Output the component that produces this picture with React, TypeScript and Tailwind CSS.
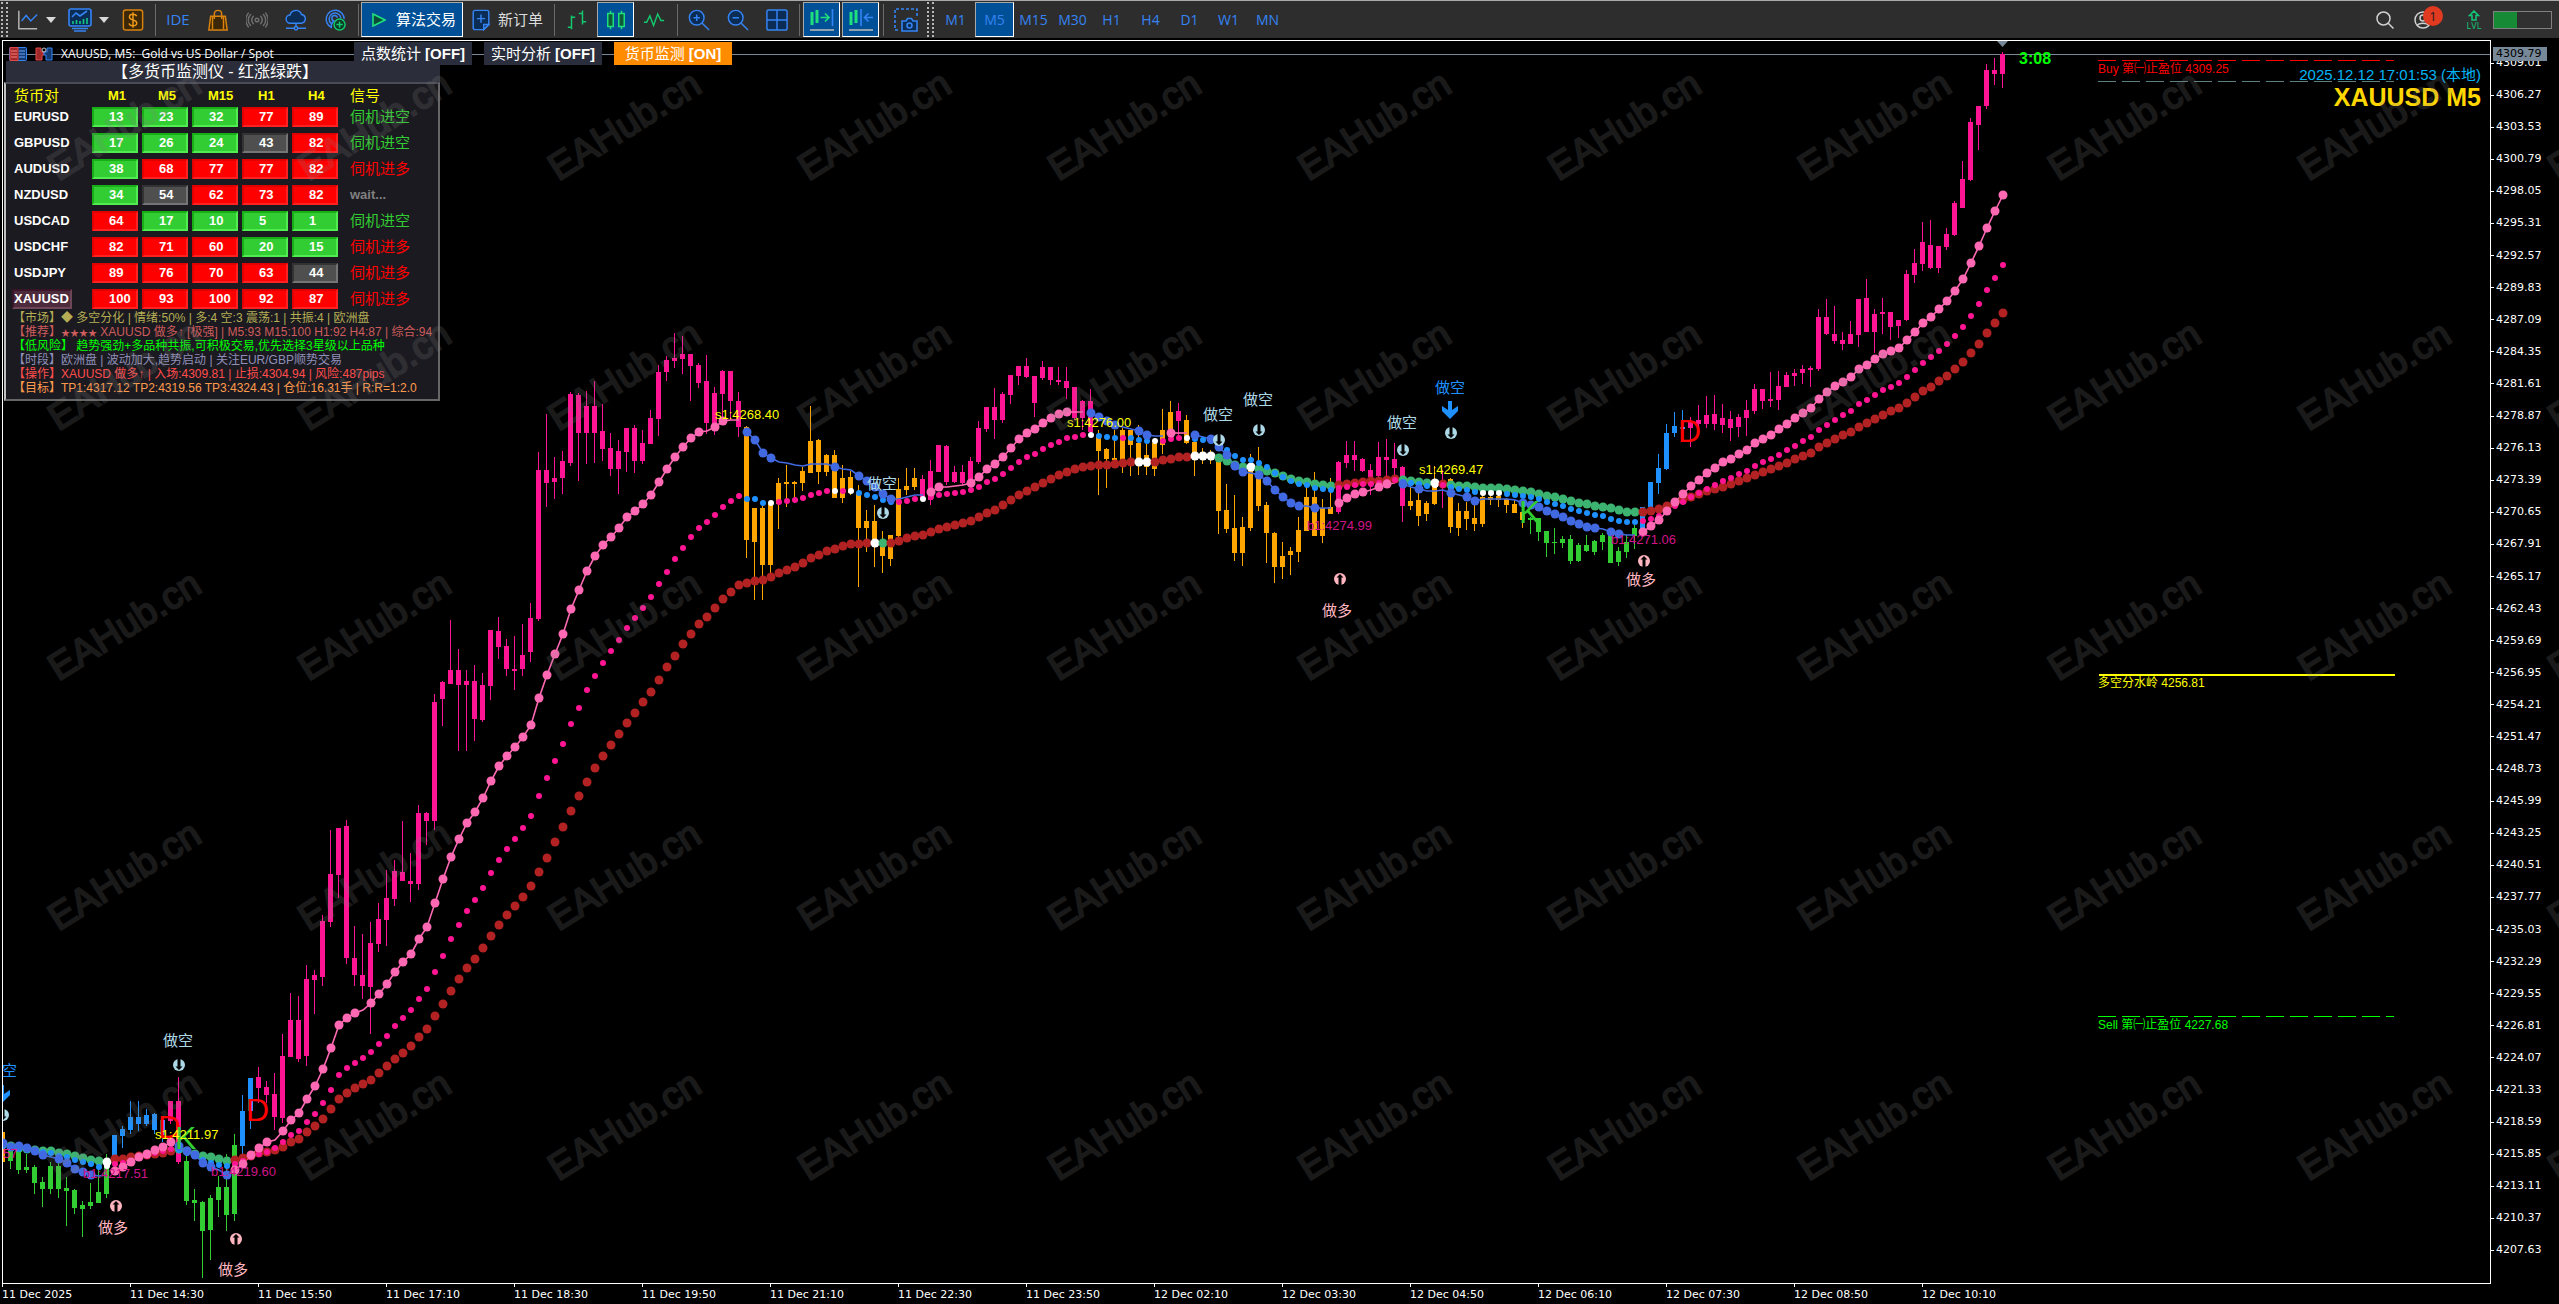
/**
 * Trading terminal - XAUUSD M5 chart with toolbar, currency monitor panel,
 * three moving averages and signal markers.
 */

import type { ReactNode } from 'react';

type ColorRun = [start: number, color: string];
type Candle = [high: number, top: number, bottom: number, low: number];
type Tone = 'up' | 'down' | 'flat';

const PINK = '#ff1493';
const ORANGE = '#ffa500';
const GREEN = '#32cd32';
const BLUE = '#1e90ff';
const BROWN = '#b22222';
const SEA = '#3cb371';
const WHITE = '#ffffff';
const ROYAL = '#4169e1';
const HOT = '#ff69b4';

// Candle geometry, one tuple per bar: high, body top, body bottom, low
const CANDLES: Candle[] = [
  [1132, 1132, 1162, 1162], [1148, 1148, 1161, 1169], [1150, 1150, 1170, 1174], [1154, 1167, 1170, 1173], [1165, 1167, 1183, 1194],
  [1177, 1182, 1189, 1207], [1162, 1166, 1189, 1194], [1163, 1166, 1189, 1198], [1177, 1188, 1191, 1226], [1189, 1190, 1208, 1214],
  [1201, 1205, 1209, 1237], [1183, 1202, 1206, 1209], [1167, 1192, 1203, 1203], [1154, 1164, 1194, 1198], [1135, 1135, 1157, 1157],
  [1126, 1129, 1136, 1148], [1101, 1117, 1130, 1134], [1101, 1117, 1124, 1131], [1109, 1115, 1124, 1126], [1113, 1114, 1130, 1134],
  [1116, 1120, 1135, 1142], [1101, 1101, 1121, 1124], [1077, 1101, 1162, 1164], [1155, 1161, 1201, 1205], [1189, 1200, 1203, 1221],
  [1201, 1202, 1231, 1278], [1195, 1198, 1230, 1260], [1176, 1187, 1200, 1217], [1154, 1187, 1215, 1231], [1134, 1145, 1214, 1221],
  [1095, 1111, 1146, 1154], [1078, 1078, 1111, 1129], [1067, 1077, 1088, 1103], [1081, 1087, 1095, 1103], [1073, 1094, 1117, 1130],
  [1034, 1056, 1118, 1123], [993, 1020, 1057, 1057], [996, 1020, 1059, 1062], [965, 979, 1056, 1066], [970, 975, 980, 1014],
  [915, 921, 977, 986], [830, 874, 922, 927], [828, 828, 875, 898], [820, 826, 958, 964], [926, 958, 975, 986],
  [934, 975, 986, 999], [922, 943, 987, 1034], [903, 919, 944, 952], [870, 898, 920, 946], [860, 871, 899, 906],
  [821, 872, 881, 881], [853, 881, 884, 902], [805, 813, 884, 890], [812, 813, 821, 845], [694, 702, 821, 830],
  [681, 682, 699, 726], [620, 670, 684, 684], [649, 670, 685, 751], [670, 681, 685, 751], [665, 681, 719, 741],
  [673, 685, 720, 722], [630, 630, 686, 700], [617, 631, 647, 659], [639, 646, 669, 676], [636, 669, 671, 690],
  [624, 655, 669, 676], [603, 618, 652, 662], [452, 470, 619, 621], [414, 470, 483, 507], [457, 478, 482, 499],
  [451, 461, 478, 494], [392, 394, 463, 466], [393, 395, 433, 481], [391, 406, 433, 464], [381, 406, 433, 463],
  [404, 431, 449, 461], [433, 448, 469, 476], [440, 451, 469, 494], [428, 428, 452, 472], [425, 428, 461, 473],
  [430, 443, 461, 464], [410, 418, 444, 444], [365, 372, 419, 436], [356, 360, 372, 381], [333, 358, 361, 368],
  [336, 354, 359, 374], [354, 354, 366, 401], [363, 365, 383, 388], [355, 381, 423, 434], [387, 393, 428, 435],
  [370, 371, 394, 420], [371, 371, 401, 420], [392, 401, 427, 437], [426, 427, 540, 558], [508, 508, 542, 600],
  [506, 508, 565, 600], [504, 504, 565, 575], [478, 483, 504, 529], [465, 482, 484, 507], [481, 482, 484, 500],
  [467, 471, 483, 491], [406, 441, 473, 473], [439, 440, 472, 484], [454, 455, 472, 476], [450, 455, 498, 498],
  [465, 478, 498, 503], [471, 477, 493, 495], [485, 493, 528, 587], [510, 521, 528, 552], [505, 521, 540, 567],
  [531, 540, 556, 573], [535, 535, 559, 566], [478, 489, 536, 538], [468, 486, 490, 495], [468, 478, 487, 490],
  [475, 479, 498, 498], [460, 471, 500, 505], [445, 445, 472, 472], [445, 446, 482, 485], [466, 472, 482, 483],
  [465, 472, 483, 485], [457, 461, 480, 482], [421, 428, 462, 464], [407, 407, 429, 432], [388, 407, 420, 439],
  [392, 394, 420, 423], [375, 375, 395, 404], [366, 366, 376, 385], [358, 366, 377, 378], [376, 376, 403, 417],
  [361, 367, 378, 380], [367, 367, 380, 385], [367, 380, 382, 385], [367, 381, 388, 399], [387, 387, 418, 420],
  [400, 401, 418, 430], [389, 401, 432, 435], [430, 435, 451, 495], [448, 449, 459, 488], [430, 458, 460, 465],
  [428, 430, 460, 473], [430, 430, 445, 476], [425, 443, 462, 475], [440, 455, 467, 475], [440, 443, 469, 476],
  [409, 430, 445, 454], [401, 412, 430, 435], [403, 411, 421, 435], [415, 420, 443, 444], [440, 442, 455, 476],
  [448, 452, 455, 464], [450, 453, 457, 464], [460, 462, 511, 534], [484, 510, 529, 533], [495, 528, 553, 561],
  [517, 527, 553, 566], [454, 464, 528, 531], [447, 470, 506, 511], [502, 505, 533, 563], [532, 533, 567, 583],
  [542, 556, 567, 579], [547, 551, 555, 575], [517, 530, 552, 562], [487, 497, 531, 531], [472, 497, 536, 536],
  [499, 508, 536, 543], [478, 507, 514, 514], [461, 462, 512, 514], [441, 455, 463, 468], [441, 455, 460, 471],
  [458, 459, 471, 472], [464, 470, 477, 495], [442, 457, 476, 480], [439, 457, 460, 477], [443, 459, 468, 477],
  [466, 467, 506, 522], [487, 501, 506, 510], [490, 500, 516, 526], [501, 503, 514, 521], [466, 484, 504, 505],
  [470, 482, 487, 508], [478, 479, 527, 533], [503, 511, 528, 536], [502, 511, 519, 530], [504, 518, 524, 531],
  [493, 497, 524, 527], [495, 497, 500, 505], [494, 496, 500, 507], [498, 499, 505, 513], [500, 504, 513, 513],
  [507, 512, 520, 528], [517, 518, 520, 534], [518, 518, 532, 541], [531, 531, 543, 557], [528, 542, 543, 554],
  [536, 539, 543, 548], [535, 539, 561, 564], [543, 545, 561, 562], [535, 545, 551, 552], [540, 541, 552, 555],
  [533, 535, 542, 550], [533, 535, 563, 563], [547, 551, 562, 566], [535, 542, 552, 558], [525, 528, 536, 549],
  [507, 507, 529, 529], [482, 482, 507, 507], [454, 468, 483, 494], [424, 433, 469, 470], [412, 426, 433, 437],
  [410, 427, 429, 433], [417, 422, 428, 447], [405, 420, 424, 430], [396, 415, 424, 428], [395, 414, 424, 430],
  [404, 418, 425, 433], [411, 419, 428, 441], [414, 417, 427, 437], [400, 410, 418, 436], [384, 389, 411, 414],
  [389, 389, 401, 409], [372, 399, 401, 407], [371, 386, 400, 410], [372, 375, 387, 387], [369, 373, 376, 386],
  [365, 369, 373, 384], [366, 368, 370, 387], [309, 317, 369, 371], [299, 317, 334, 335], [306, 334, 341, 344],
  [332, 340, 344, 350], [321, 334, 344, 344], [299, 299, 335, 347], [279, 298, 332, 332], [309, 314, 332, 353],
  [298, 312, 314, 334], [312, 312, 327, 340], [320, 320, 326, 338], [270, 274, 320, 321], [249, 263, 275, 283],
  [222, 242, 264, 271], [220, 245, 268, 269], [246, 246, 268, 273], [228, 234, 247, 250], [201, 203, 235, 236],
  [161, 179, 208, 208], [118, 122, 180, 181], [106, 106, 125, 150], [64, 70, 106, 109], [58, 70, 74, 85],
  [52, 54, 74, 88],
];

const CANDLE_COLORS: ColorRun[] = [
  [0, ORANGE], [1, GREEN], [14, BLUE], [21, PINK], [23, GREEN], [30, BLUE], [32, PINK], [93, ORANGE], [115, PINK],
  [137, ORANGE], [147, PINK], [148, ORANGE], [167, PINK], [176, ORANGE], [180, PINK], [181, ORANGE], [191, GREEN],
  [205, BLUE], [211, PINK],
];

const SLOW = [
  1144, 1146, 1148, 1149, 1150, 1151, 1151, 1153, 1154, 1156, 1158, 1160, 1161, 1162, 1159, 1159, 1157, 1156, 1155, 1154,
  1153, 1151, 1149, 1151, 1154, 1156, 1157, 1159, 1161, 1160, 1158, 1156, 1153, 1152, 1150, 1147, 1142, 1139, 1132, 1126,
  1119, 1109, 1099, 1093, 1088, 1084, 1080, 1073, 1066, 1059, 1053, 1046, 1037, 1029, 1016, 1004, 991, 979, 968, 959,
  948, 936, 925, 915, 906, 897, 886, 872, 858, 842, 827, 811, 796, 782, 768, 756, 745, 734, 723, 713,
  702, 692, 680, 667, 656, 644, 634, 624, 617, 608, 599, 592, 585, 583, 581, 580, 577, 573, 570, 567,
  563, 558, 555, 551, 549, 546, 544, 544, 543, 543, 543, 543, 541, 538, 536, 535, 532, 529, 527, 525,
  523, 521, 517, 513, 510, 505, 500, 495, 491, 487, 483, 479, 475, 472, 469, 467, 466, 465, 465, 464,
  463, 462, 462, 462, 462, 460, 459, 457, 457, 456, 456, 456, 458, 461, 465, 467, 467, 469, 471, 473,
  476, 479, 481, 482, 484, 485, 486, 485, 484, 483, 482, 481, 481, 480, 479, 480, 481, 482, 483, 483,
  484, 485, 486, 486, 487, 488, 488, 488, 489, 490, 491, 492, 494, 496, 497, 499, 501, 503, 504, 506,
  507, 508, 510, 512, 512, 512, 511, 509, 506, 503, 500, 497, 494, 491, 489, 487, 484, 481, 478, 475,
  472, 469, 466, 463, 459, 456, 453, 447, 443, 439, 435, 432, 427, 423, 419, 415, 411, 408, 403, 397,
  391, 387, 381, 376, 369, 362, 353, 344, 333, 323, 313,
];

const SLOW_COLORS: ColorRun[] = [
  [0, SEA], [13, WHITE], [14, BROWN], [22, SEA], [29, BROWN], [109, WHITE], [110, SEA], [111, BROWN], [142, WHITE],
  [144, BROWN], [149, WHITE], [152, SEA], [156, WHITE], [157, SEA], [167, BROWN], [175, SEA], [179, WHITE],
  [180, BROWN], [181, SEA], [205, BROWN],
];

const MID = [
  1146, 1148, 1149, 1150, 1151, 1152, 1153, 1156, 1157, 1160, 1162, 1164, 1167, 1166, 1164, 1163, 1161, 1158, 1156, 1153,
  1151, 1149, 1150, 1153, 1156, 1160, 1163, 1165, 1166, 1164, 1161, 1157, 1154, 1152, 1148, 1142, 1135, 1131, 1122, 1114,
  1103, 1090, 1075, 1068, 1063, 1058, 1052, 1044, 1036, 1026, 1018, 1010, 999, 989, 972, 956, 939, 925, 911, 900,
  888, 873, 860, 849, 839, 828, 816, 796, 778, 761, 744, 724, 708, 690, 676, 663, 651, 640, 628, 618,
  608, 597, 584, 572, 559, 548, 537, 528, 522, 515, 507, 501, 496, 499, 499, 503, 503, 502, 501, 500,
  498, 495, 493, 491, 491, 491, 491, 493, 495, 497, 500, 502, 502, 501, 499, 499, 497, 495, 494, 493,
  492, 490, 487, 482, 479, 474, 468, 462, 457, 454, 449, 445, 442, 438, 437, 435, 435, 436, 437, 438,
  438, 438, 440, 441, 441, 441, 439, 438, 438, 439, 440, 441, 444, 450, 456, 460, 460, 463, 467, 473,
  477, 481, 484, 485, 488, 489, 490, 488, 487, 485, 484, 484, 483, 482, 480, 482, 483, 484, 486, 485,
  485, 487, 489, 490, 492, 493, 493, 493, 494, 495, 496, 497, 499, 502, 504, 506, 509, 511, 513, 515,
  516, 519, 521, 522, 522, 521, 519, 516, 511, 506, 502, 497, 493, 489, 485, 481, 478, 474, 471, 466,
  462, 459, 455, 450, 446, 441, 437, 430, 425, 420, 415, 411, 404, 400, 395, 390, 387, 383, 377, 370,
  363, 357, 351, 344, 336, 327, 316, 304, 290, 278, 265,
];

const MID_COLORS: ColorRun[] = [
  [0, BLUE], [1, WHITE], [2, BLUE], [13, WHITE], [14, PINK], [22, BLUE], [29, PINK], [93, BLUE], [96, WHITE],
  [97, PINK], [104, WHITE], [105, PINK], [106, WHITE], [107, BLUE], [112, PINK], [115, WHITE], [116, PINK],
  [136, WHITE], [137, BLUE], [140, PINK], [141, BLUE], [144, WHITE], [145, PINK], [148, WHITE], [149, BLUE],
  [167, PINK], [175, BLUE], [179, WHITE], [180, PINK], [181, BLUE], [185, WHITE], [188, BLUE], [205, PINK],
];

const FAST = [
  1143, 1147, 1146, 1148, 1151, 1155, 1157, 1159, 1163, 1169, 1172, 1175, 1176, 1175, 1171, 1167, 1162, 1157, 1154, 1150,
  1147, 1142, 1146, 1151, 1155, 1163, 1167, 1170, 1175, 1170, 1164, 1155, 1148, 1142, 1140, 1131, 1120, 1113, 1099, 1086,
  1069, 1048, 1025, 1018, 1013, 1010, 1003, 994, 984, 972, 962, 954, 939, 927, 903, 879, 857, 839, 823, 812,
  798, 781, 766, 756, 747, 737, 725, 698, 675, 654, 634, 609, 590, 571, 556, 545, 537, 528, 517, 511,
  504, 495, 482, 469, 457, 447, 438, 432, 431, 427, 421, 420, 420, 432, 440, 453, 458, 462, 463, 465,
  466, 464, 464, 464, 467, 469, 470, 476, 481, 487, 494, 499, 499, 497, 495, 495, 492, 487, 487, 486,
  485, 483, 477, 469, 464, 457, 448, 439, 433, 429, 423, 418, 414, 412, 412, 412, 413, 417, 421, 425,
  427, 429, 431, 435, 436, 436, 433, 433, 433, 435, 437, 439, 447, 455, 466, 472, 473, 475, 481, 490,
  497, 503, 506, 506, 508, 508, 508, 503, 498, 494, 492, 490, 487, 484, 483, 484, 487, 489, 491, 491,
  490, 493, 495, 497, 501, 499, 499, 499, 499, 500, 503, 505, 507, 511, 514, 517, 521, 524, 527, 528,
  529, 532, 534, 535, 535, 532, 526, 520, 511, 502, 494, 486, 480, 473, 468, 462, 459, 454, 450, 443,
  439, 435, 429, 424, 418, 413, 408, 399, 392, 386, 382, 377, 369, 365, 359, 354, 351, 348, 340, 332,
  323, 317, 309, 301, 291, 279, 263, 246, 228, 211, 195,
];

const FAST_COLORS: ColorRun[] = [
  [0, ROYAL], [14, HOT], [22, ROYAL], [29, HOT], [93, ROYAL], [116, HOT], [136, ROYAL], [146, HOT], [149, ROYAL],
  [167, HOT], [175, ROYAL], [205, HOT],
];

const FAST_NO_DOT = new Set([
  6, 12, 13, 27, 34, 45, 88, 91, 92, 97, 98, 99, 100, 101, 102, 103, 105, 106, 112, 113, 114, 115, 118, 119, 120, 134,
  135, 140, 141, 144, 145, 147, 148, 150, 156, 163, 165, 166, 171, 174, 176, 178, 179, 180, 182, 185, 186, 187, 188,
  189, 200, 203, 204,
]);

const barX = (i: number) => 2 + i * 8;

const colorAt = (runs: ColorRun[], i: number) => {
  let color = runs[0][1];
  for (const [start, c] of runs) {
    if (start <= i) color = c;
  }
  return color;
};

const FAST_SEGMENTS = FAST_COLORS.map(([start, color], n) => {
  const end = n + 1 < FAST_COLORS.length ? FAST_COLORS[n + 1][0] : FAST.length;
  const points = FAST.slice(start, end)
    .map((y, k) => `${barX(start + k) + 1},${y}`)
    .join(' ');
  return { color, points };
});

const PRICE_TAGS = [
  { x: 3, y: 1158, text: '57', color: '#e0148a' },
  { x: 155, y: 1139, text: 's1:4211.97', color: '#ffff00' },
  { x: 83, y: 1178, text: 'b1:4217.51', color: '#d01488' },
  { x: 211, y: 1176, text: 'b1:4219.60', color: '#d01488' },
  { x: 715, y: 419, text: 's1:4268.40', color: '#ffff00' },
  { x: 1067, y: 427, text: 's1:4276.00', color: '#ffff00' },
  { x: 1307, y: 530, text: 'b1:4274.99', color: '#d01488' },
  { x: 1419, y: 474, text: 's1:4269.47', color: '#ffff00' },
  { x: 1611, y: 544, text: 'b1:4271.06', color: '#d01488' },
];

const SIGNALS = [
  { x: 2, y: 1076, text: '做空', color: BLUE },
  { x: 178, y: 1046, text: '做空', color: '#add8e6' },
  { x: 113, y: 1233, text: '做多', color: '#ffb6c1' },
  { x: 233, y: 1275, text: '做多', color: '#ffb6c1' },
  { x: 882, y: 489, text: '做空', color: '#add8e6' },
  { x: 1218, y: 420, text: '做空', color: '#add8e6' },
  { x: 1258, y: 405, text: '做空', color: '#add8e6' },
  { x: 1402, y: 428, text: '做空', color: '#add8e6' },
  { x: 1450, y: 393, text: '做空', color: BLUE },
  { x: 1337, y: 616, text: '做多', color: '#ffb6c1' },
  { x: 1641, y: 585, text: '做多', color: '#ffb6c1' },
];

const MARKERS = [
  { x: 3, y: 1115, up: false },
  { x: 179, y: 1065, up: false },
  { x: 116, y: 1206, up: true },
  { x: 236, y: 1239, up: true },
  { x: 883, y: 513, up: false },
  { x: 1219, y: 440, up: false },
  { x: 1259, y: 430, up: false },
  { x: 1403, y: 450, up: false },
  { x: 1451, y: 433, up: false },
  { x: 1340, y: 579, up: true },
  { x: 1644, y: 561, up: true },
];

const LETTERS = [
  { x: 158, y: 1138, text: 'D', color: '#ff0000' },
  { x: 246, y: 1121, text: 'D', color: '#ff0000' },
  { x: 175, y: 1149, text: 'K', color: GREEN },
  { x: 1519, y: 523, text: 'K', color: GREEN },
  { x: 1678, y: 442, text: 'D', color: '#ff0000' },
];

const PRICES = Array.from({ length: 38 }, (_, i) => (4309.01 - i * 2.74).toFixed(2));

const TIMES = [
  '11 Dec 2025', '11 Dec 14:30', '11 Dec 15:50', '11 Dec 17:10', '11 Dec 18:30', '11 Dec 19:50', '11 Dec 21:10',
  '11 Dec 22:30', '11 Dec 23:50', '12 Dec 02:10', '12 Dec 03:30', '12 Dec 04:50', '12 Dec 06:10', '12 Dec 07:30',
  '12 Dec 08:50', '12 Dec 10:10',
];

const TIMEFRAMES = ['M1', 'M5', 'M15', 'M30', 'H1', 'H4', 'D1', 'W1', 'MN'];

const PAIRS: { name: string; values: number[]; signal: 'short' | 'long' | 'wait' }[] = [
  { name: 'EURUSD', values: [13, 23, 32, 77, 89], signal: 'short' },
  { name: 'GBPUSD', values: [17, 26, 24, 43, 82], signal: 'short' },
  { name: 'AUDUSD', values: [38, 68, 77, 77, 82], signal: 'long' },
  { name: 'NZDUSD', values: [34, 54, 62, 73, 82], signal: 'wait' },
  { name: 'USDCAD', values: [64, 17, 10, 5, 1], signal: 'short' },
  { name: 'USDCHF', values: [82, 71, 60, 20, 15], signal: 'long' },
  { name: 'USDJPY', values: [89, 76, 70, 63, 44], signal: 'long' },
  { name: 'XAUUSD', values: [100, 93, 100, 92, 87], signal: 'long' },
];

const TONE_CLASSES: Record<Tone, string> = {
  up: 'bg-[#ff0000] border-t-[#e00000] border-l-[#e00000] border-r-[#ff2222] border-b-[#ff2222]',
  down: 'bg-[#32cd32] border-t-[#18ae18] border-l-[#18ae18] border-r-[#50ec50] border-b-[#50ec50]',
  flat: 'bg-[#4f4f4f] border-t-[#333333] border-l-[#333333] border-r-[#757575] border-b-[#757575]',
};

const SIGNAL_TEXT = {
  short: { label: '伺机进空', className: 'text-[15px] font-normal text-[#32cd32]' },
  long: { label: '伺机进多', className: 'text-[15px] font-normal text-[#ff0000]' },
  wait: { label: 'wait...', className: 'text-[13px] font-bold text-[#808080]' },
};

const NOTES: { text: ReactNode; className: string }[] = [
  { text: '【市场】◆ 多空分化 | 情绪:50% | 多:4 空:3 震荡:1 | 共振:4 | 欧洲盘', className: 'text-[#b5ad55]' },
  {
    text: <>【推荐】<span className="text-[9px]">★★★★</span> XAUUSD 做多↑ [极强] | M5:93 M15:100 H1:92 H4:87 | 综合:94</>,
    className: 'text-[#cd5c5c]',
  },
  { text: '【低风险】 趋势强劲+多品种共振,可积极交易,优先选择3星级以上品种', className: 'text-[#00ff00]' },
  { text: '【时段】欧洲盘 | 波动加大,趋势启动 | 关注EUR/GBP顺势交易', className: 'text-[#8f8fb8]' },
  { text: '【操作】XAUUSD 做多↑ | 入场:4309.81 | 止损:4304.94 | 风险:487pips', className: 'text-[#ff4d4d]' },
  { text: '【目标】TP1:4317.12 TP2:4319.56 TP3:4324.43 | 仓位:16.31手 | R:R=1:2.0', className: 'text-[#ff9a4d]' },
];

const toneOf = (value: number): Tone => {
  if (value >= 60) return 'up';
  if (value <= 40) return 'down';
  return 'flat';
};

/* ---------- Toolbar ---------- */

function Svg({ children, size = 'size-[22px]' }: { children: ReactNode; size?: string }) {
  return (
    <svg className={`${size} shrink-0`} viewBox="0 0 24 24" fill="none" stroke="#3584f4" strokeWidth={1.6} aria-hidden="true">
      {children}
    </svg>
  );
}

const Caret = () => (
  <svg className="w-[10px] h-[7px] shrink-0" viewBox="0 0 10 7" aria-hidden="true">
    <path d="M0 1h10L5 7z" fill="#d8d8d8" />
  </svg>
);

const Grip = () => (
  <span className="flex gap-[3px] h-full py-px">
    <span className="border-l-2 border-dotted border-[#b8b8b8]" />
    <span className="border-l-2 border-dotted border-[#b8b8b8]" />
  </span>
);

const Divider = ({ className }: { className: string }) => (
  <span className={`flex justify-center h-8 shrink-0 ${className}`}>
    <span className="w-px bg-[#6a6a6a]" />
  </span>
);

function ToolButton({ label, width, active = false, children }: { label: string; width: string; active?: boolean; children: ReactNode }) {
  return (
    <button
      type="button"
      aria-label={label}
      aria-pressed={active}
      className={`${width} h-[35px] shrink-0 flex items-center justify-center ${
        active ? 'bg-[#005097] border border-t-[#a8a8a8] border-l-[#a8a8a8] border-r-white border-b-white' : ''
      }`}
    >
      {children}
    </button>
  );
}

function Toolbar() {
  return (
    <header className="h-[38px] shrink-0 flex items-center bg-[#2d2d2d] border-t border-[#a9a9a9] font-['Open_Sans','Noto_Sans_CJK_SC',sans-serif]">
      <div className="w-[9px] h-full pl-px shrink-0"><Grip /></div>
      <button type="button" aria-label="图表类型" className="w-[50px] shrink-0 flex items-center gap-[7px] pl-2">
        <Svg>
          <path d="M2 2v19.5h20" stroke="#b5b5b5" />
          <path d="M5 13l5-6 5 6 7-7" />
        </Svg>
        <Caret />
      </button>
      <button type="button" aria-label="指标" className="w-[54px] shrink-0 flex items-center gap-[7px] pl-[9px]">
        <Svg size="size-6">
          <rect x="1" y="1" width="22" height="17" rx="2" fill="#0b2c55" />
          <path d="M4 9l4-4 4 3 7-5" />
          <path d="M5 16v-3M8.500 16v-4M12 16v-3M15.500 16v-5M19 16v-6" stroke="#12c98a" />
          <path d="M4 20.500h16M6 23h12" />
        </Svg>
        <Caret />
      </button>
      <ToolButton label="交易" width="w-10">
        <Svg>
          <rect x="1.500" y="1" width="21" height="22" rx="2.500" stroke="#d9830f" fill="#3c2706" />
          <path d="M16 8c-.5-1.600-2-2.200-4-2.200-2.200 0-3.900 1-3.900 2.900 0 4.200 8 2.400 8 6.600 0 2-1.800 3-4.100 3-2.300 0-3.900-.9-4.300-2.700M12 3.500v17" stroke="#f09a1a" />
        </Svg>
      </ToolButton>
      <Divider className="w-[5px]" />
      <ToolButton label="IDE" width="w-10">
        <span className="text-[15px] text-[#3584f4]">IDE</span>
      </ToolButton>
      <ToolButton label="市场" width="w-[39px]">
        <Svg>
          <path d="M4 8h16l2 15H2z" stroke="#d9830f" fill="#3c2706" />
          <path d="M8 11V5.500C8 3 9.500 1.500 12 1.500s4 1.500 4 4V11M6 8v14M18 8v14" stroke="#d9830f" />
        </Svg>
      </ToolButton>
      <ToolButton label="信号" width="w-[39px]">
        <Svg>
          <g stroke="#6e6e6e" strokeLinecap="round">
            <circle cx="12" cy="12" r="2" />
            <path d="M8 8c-2 2.300-2 5.700 0 8M16 8c2 2.300 2 5.700 0 8M5 6c-3.300 3.500-3.300 8.500 0 12M19 6c3.300 3.500 3.300 8.500 0 12M2.500 4.500c-3.300 4.500-3.300 10.500 0 15M21.500 4.500c3.300 4.500 3.300 10.500 0 15" />
          </g>
        </Svg>
      </ToolButton>
      <ToolButton label="虚拟主机" width="w-[39px]">
        <Svg>
          <path d="M6 15.500a4.500 4.500 0 0 1-.5-9A6.500 6.500 0 0 1 18 6a4.800 4.800 0 0 1 0 9.500z" fill="#0b2c55" />
          <path d="M12 15.500v4M1 21h9M14 21h9" />
          <circle cx="12" cy="21" r="1.800" />
        </Svg>
      </ToolButton>
      <ToolButton label="连接" width="w-10">
        <Svg>
          <path d="M8 20a9.800 9.800 0 1 1 14-9M8 16a6.500 6.500 0 1 1 10.500-6M11 13a3 3 0 1 1 3.500-3.500M8 21v-4l3-5" />
          <circle cx="17" cy="17" r="6" stroke="#12c96e" fill="#0c3a25" />
          <path d="M17 13.500v7M13.500 17h7" stroke="#12c96e" />
        </Svg>
      </ToolButton>
      <Divider className="w-[6px]" />
      <button
        type="button"
        aria-pressed
        className="w-[102px] h-[35px] shrink-0 flex items-center gap-[10px] pl-[10px] whitespace-nowrap text-[15px] text-white bg-[#005097] border border-t-[#a8a8a8] border-l-[#a8a8a8] border-r-white border-b-white"
      >
        <svg className="w-[14px] h-[14px] shrink-0" viewBox="0 0 14 14" aria-hidden="true">
          <path d="M1 1l12 6-12 6z" fill="#0c4a3a" stroke="#1ee07c" strokeWidth={1.600} />
        </svg>
        算法交易
      </button>
      <button type="button" className="w-[88px] h-[35px] shrink-0 flex items-center gap-[6px] pl-[7px] whitespace-nowrap text-[15px] text-[#dcdcdc]">
        <Svg>
          <path d="M5.500 1.500h13a2 2 0 0 1 2 2V17l-5.500 5.500H5.500a2 2 0 0 1-2-2v-17a2 2 0 0 1 2-2z" fill="#0b2c55" />
          <path d="M20.500 17H15v5.500zM12 6v9M7.500 10.500h9" />
        </Svg>
        新订单
      </button>
      <Divider className="w-[6px]" />
      <ToolButton label="柱状图" width="w-10">
        <Svg>
          <path d="M6 7v15M2 20h4M6 9h4M18 1.500V17M14 5h4M18 14h4" stroke="#12c96e" />
        </Svg>
      </ToolButton>
      <ToolButton label="蜡烛图" width="w-[37px]" active>
        <Svg>
          <path d="M6 2v3M6 19v3M18 2v3M18 19v3" stroke="#1ee07c" />
          <path d="M3 5h6v14H3zM15 5h6v14h-6z" stroke="#1ee07c" fill="#0c5a3a" />
        </Svg>
      </ToolButton>
      <ToolButton label="折线图" width="w-10">
        <Svg>
          <path d="M1 14.500h3l3.500-7 4 10.500L16 5.500l3.500 7H23" stroke="#12c96e" />
        </Svg>
      </ToolButton>
      <Divider className="w-[6px]" />
      <ToolButton label="放大" width="w-[38px]">
        <Svg>
          <circle cx="9.500" cy="9.500" r="8" fill="#0b2c55" />
          <path d="M15.500 15.500L23 23M9.500 6v7M6 9.500h7" />
        </Svg>
      </ToolButton>
      <ToolButton label="缩小" width="w-[39px]">
        <Svg>
          <circle cx="9.500" cy="9.500" r="8" fill="#0b2c55" />
          <path d="M15.500 15.500L23 23M6 9.500h7" />
        </Svg>
      </ToolButton>
      <ToolButton label="平铺窗口" width="w-[39px]">
        <Svg>
          <rect x="1" y="1" width="22" height="22" rx="2" fill="#0b2c55" />
          <path d="M12 1v22M1 12h22" />
        </Svg>
      </ToolButton>
      <Divider className="w-[7px]" />
      <div className="flex gap-[2px]">
        <ToolButton label="自动滚动" width="w-[37px]" active>
          <Svg size="size-6">
            <path d="M2 4v13M7 2v13" stroke="#1ee07c" strokeWidth={3} />
            <path d="M10.500 9.500h8M15 5.500l4 4-4 4" stroke="#1ee07c" />
            <path d="M22.500 1v17" />
            <path d="M0 22h24" stroke="#b5b5b5" />
          </Svg>
        </ToolButton>
        <ToolButton label="图表移动" width="w-[37px]" active>
          <Svg size="size-6">
            <path d="M2 4v13M7 2v13" stroke="#1ee07c" strokeWidth={3} />
            <path d="M12 1v17M24 9.500h-8M19.500 5.500l-4 4 4 4" />
            <path d="M0 22h24" stroke="#b5b5b5" />
          </Svg>
        </ToolButton>
      </div>
      <Divider className="w-[9px]" />
      <ToolButton label="截图" width="w-9">
        <Svg size="size-6">
          <path d="M4 22H1V1h22v7" strokeDasharray="3 2" />
          <path d="M9 13h3l1.500-2.500h4L19 13h4v10H8V13z" fill="#0b2c55" />
          <circle cx="15.500" cy="17.500" r="2.500" />
        </Svg>
      </ToolButton>
      <div className="w-3 h-full pl-[3px] shrink-0"><Grip /></div>
      {TIMEFRAMES.map((tf) => (
        <ToolButton key={tf} label={tf} width="w-[39px]" active={tf === 'M5'}>
          <span className="text-[14px] text-[#3584f4]">{tf}</span>
        </ToolButton>
      ))}

      <div className="ml-auto flex items-center h-full pl-4 pr-[7px] bg-[#303030]">
        <button type="button" aria-label="搜索">
          <svg className="size-[18px]" viewBox="0 0 18 18" fill="none" stroke="#d0d0d0" strokeWidth={1.500} aria-hidden="true">
            <circle cx="7.500" cy="7.500" r="6.500" />
            <path d="M12 12l5.500 5.500" />
          </svg>
        </button>
        <button type="button" aria-label="账户" className="relative ml-5 mr-[34px]">
          <svg className="size-[18px]" viewBox="0 0 18 18" fill="none" stroke="#d0d0d0" strokeWidth={1.500} aria-hidden="true">
            <circle cx="9" cy="9" r="8" />
            <circle cx="9" cy="7" r="3" />
            <path d="M3.500 14.500c1-3 10-3 11 0" />
          </svg>
          <span className="absolute left-[9px] -top-[5px] size-5 rounded-full bg-[#e03a20] text-[13px] leading-5 text-center text-[#1c1c1c]">1</span>
        </button>
        <div className="flex flex-col items-center w-4">
          <svg className="w-3 h-[11px]" viewBox="0 0 12 11" fill="none" stroke="#10c878" strokeWidth={1.500} aria-hidden="true">
            <path d="M6 1l4.500 4.500H8V10H4V5.500H1.500z" />
          </svg>
          <span className="text-[9px] leading-[9px] text-[#10c878]">LVL</span>
        </div>
        <div className="ml-[11px] w-[59px] h-[18px] border border-[#808080]">
          <div className="w-[23px] h-full bg-[#168a34]" />
        </div>
      </div>
    </header>
  );
}

/* ---------- Chart ---------- */

function TargetLine({ y, color, label }: { y: number; color: string; label?: string }) {
  return (
    <g>
      <path d={`M2098 ${y}h296`} stroke={color} strokeDasharray="18 6" shapeRendering="crispEdges" />
      {label && <text x={2098} y={y + 12} fill={color} fontSize={12}>{label}</text>}
    </g>
  );
}

function PriceChart() {
  return (
    <svg
      className="absolute inset-0 size-full font-['Liberation_Sans','Noto_Sans_CJK_SC',sans-serif]"
      viewBox="3 41 2487 1242"
      preserveAspectRatio="none"
      role="img"
      aria-label="XAUUSD M5"
    >
      <path d="M0 54.500h2490" stroke="#778899" shapeRendering="crispEdges" />
      <path d="M1997 41h11l-5.500 6z" fill="#778899" />

      {/* Candles */}
      <g shapeRendering="crispEdges">
        {CANDLES.map(([high, top, bottom, low], i) => (
          <g key={i} fill={colorAt(CANDLE_COLORS, i)}>
            <rect x={barX(i)} y={high} width={1} height={low - high} />
            <rect x={barX(i) - 2} y={top} width={5} height={bottom - top} />
          </g>
        ))}
      </g>

      {/* Moving averages */}
      {FAST_SEGMENTS.map((seg, i) => (
        <polyline key={i} points={seg.points} fill="none" stroke={seg.color} strokeWidth={1.600} />
      ))}
      {SLOW.map((y, i) => (
        <circle key={i} cx={barX(i) + 1} cy={y} r={4.500} fill={colorAt(SLOW_COLORS, i)} />
      ))}
      {MID.map((y, i) => (
        <circle key={i} cx={barX(i) + 1} cy={y} r={3} fill={colorAt(MID_COLORS, i)} />
      ))}
      {FAST.map((y, i) =>
        FAST_NO_DOT.has(i) ? null : <circle key={i} cx={barX(i) + 1} cy={y} r={4.500} fill={colorAt(FAST_COLORS, i)} />
      )}

      {/* Signals */}
      {MARKERS.map(({ x, y, up }) => (
        <g key={`${x}-${y}`} transform={`translate(${x} ${y})`}>
          <circle r={6} fill={up ? '#ffb6c1' : '#add8e6'} />
          <path
            d={up ? 'M-1.500 6V-1.500H-3.500L0-5L3.500-1.500H1.500V6z' : 'M-1.500-6V1.500H-3.500L0 5L3.500 1.500H1.500V-6z'}
            fill="#000000"
          />
        </g>
      ))}
      {[
        [2, 1085],
        [1450, 401],
      ].map(([x, y]) => (
        <path key={x} d={`M${x - 2} ${y}h4v9l6-4v5l-8 8-8-8v-5l6 4z`} fill={BLUE} />
      ))}
      {SIGNALS.map(({ x, y, text, color }) => (
        <text key={`${x}-${y}`} x={x} y={y} fill={color} fontSize={15} textAnchor="middle">{text}</text>
      ))}
      {LETTERS.map(({ x, y, text, color }) => (
        <text key={x} x={x} y={y} fill={color} fontSize={32}>{text}</text>
      ))}
      {PRICE_TAGS.map(({ x, y, text, color }) => (
        <text key={x} x={x} y={y} fill={color} fontSize={13}>{text}</text>
      ))}
      <text x={2019} y={64} fill="#00ff00" fontSize={16} fontWeight={700}>3:08</text>

      {/* Target levels */}
      <TargetLine y={60.500} color="#ff0000" label="Buy 第㈠止盈位 4309.25" />
      <TargetLine y={81.500} color="#5f8080" />
      <path d="M2099 675h296" stroke="#ffff00" strokeWidth={2} />
      <text x={2098} y={687} fill="#ffff00" fontSize={12}>多空分水岭 4256.81</text>
      <TargetLine y={1016.500} color="#00ff00" label="Sell 第㈠止盈位 4227.68" />
    </svg>
  );
}

function ChartHeader() {
  return (
    <div className="relative h-5 flex items-start pl-[6px] pt-px">
      <div className="flex items-center gap-2 w-[345px] h-[23px] shrink-0">
        <svg className="w-[18px] h-[14px]" viewBox="0 0 18 14" fill="none" aria-hidden="true">
          <rect x=".5" y=".5" width="17" height="13" rx="1" fill="#123a70" stroke="#3584f4" />
          <path d="M1 .5h8v13H1z" fill="#a02828" stroke="#e04848" />
          <path d="M2 4h6M2 7h6M2 10h6" stroke="#ff8080" />
          <path d="M10 4h6M10 7h6M10 10h6" stroke="#6aa8ff" />
        </svg>
        <svg className="w-[18px] h-[14px]" viewBox="0 0 18 14" fill="none" aria-hidden="true">
          <path d="M1 1v12h6V8h2V5H6V1z" fill="#a02828" stroke="#e04848" />
          <path d="M17 1v12h-6V8H9V5h3V1z" fill="#123a70" stroke="#3584f4" />
          <circle cx="9" cy="3" r="2" stroke="#c8c8c8" />
        </svg>
        <span className="whitespace-pre text-[12px] text-white font-['Open_Sans',sans-serif]">XAUUSD, M5:  Gold vs US Dollar / Spot</span>
      </div>
      <div className="flex gap-3">
        {[
          { name: '点数统计', on: false },
          { name: '实时分析', on: false },
          { name: '货币监测', on: true },
        ].map(({ name, on }) => (
          <button
            key={name}
            type="button"
            aria-pressed={on}
            className={`w-[118px] h-[23px] text-[15px] leading-[20px] text-white whitespace-nowrap ${on ? 'bg-[#ff8c00]' : 'bg-[#2a2e3c]'}`}
          >
            {name} <b>{on ? '[ON]' : '[OFF]'}</b>
          </button>
        ))}
      </div>
    </div>
  );
}

function MonitorPanel() {
  return (
    <section className="relative w-[436px] ml-px">
      <h2 className="ml-[2px] h-[21px] bg-[#2b2e3a] text-[16px] leading-[22px] text-white text-center pr-4">
        【多货币监测仪 - 红涨绿跌】
      </h2>
      <div className="h-[319px] bg-[#1b1a20] border-2 border-t-[#4a4c56] border-l-[#c0c0c0] border-r-[#666666] border-b-[#666666]">
        <table className="table-fixed w-full text-[13px] font-bold text-white">
          <thead>
            <tr className="h-[23px] text-left text-[#ffff00]">
              <th className="w-[86px] pl-2 text-[15px] font-normal leading-5">货币对</th>
              {['M1', 'M5', 'M15', 'H1', 'H4'].map((tf) => (
                <th key={tf} className="w-[50px] pl-4 leading-5">{tf}</th>
              ))}
              <th className="pl-2 text-[15px] font-normal leading-5">信号</th>
            </tr>
          </thead>
          <tbody>
            {PAIRS.map(({ name, values, signal }) => (
              <tr key={name} className="h-[26px] align-top">
                <th className="pl-[6px] text-left">
                  <span
                    className={`block w-[60px] h-5 leading-4 border-2 ${
                      name === 'XAUUSD'
                        ? 'bg-[#4d2a3c] border-t-[#3a1528] border-l-[#3a1528] border-r-[#6d4658] border-b-[#6d4658]'
                        : 'border-transparent'
                    }`}
                  >
                    {name}
                  </span>
                </th>
                {values.map((value, i) => (
                  <td key={i}>
                    <span className={`block w-[46px] h-5 pl-[15px] leading-4 border-2 ${TONE_CLASSES[toneOf(value)]}`}>
                      {value}
                    </span>
                  </td>
                ))}
                <td className={`pl-2 leading-5 whitespace-nowrap ${SIGNAL_TEXT[signal].className}`}>
                  {SIGNAL_TEXT[signal].label}
                </td>
              </tr>
            ))}
          </tbody>
        </table>
        <div className="-mt-1 pl-[7px] text-[12px] leading-[14px] whitespace-nowrap">
          {NOTES.map(({ text, className }) => (
            <p key={className} className={`h-[14px] ${className}`}>{text}</p>
          ))}
        </div>
      </div>
    </section>
  );
}

function PriceAxis() {
  return (
    <div className="relative flex flex-col justify-between pt-[17px] pb-[25px] text-[11px] leading-4 text-white font-['DejaVu_Sans',sans-serif]">
      {PRICES.map((price) => (
        <div key={price} className="flex items-center gap-[2px]">
          <span className="w-[3px] h-px bg-white" />
          {price}
        </div>
      ))}
      <span className="absolute left-[2px] top-[9px] w-[54px] h-[14px] pl-[3px] leading-[14px] bg-[#778899] text-black">4309.79</span>
    </div>
  );
}

function TimeAxis() {
  return (
    <div className="flex pl-[2px] text-[11px] leading-[15px] text-white whitespace-nowrap overflow-hidden font-['DejaVu_Sans',sans-serif]">
      {TIMES.map((time) => (
        <div key={time} className="w-32 shrink-0">
          <span className="block w-px h-[3px] bg-white" />
          {time}
        </div>
      ))}
    </div>
  );
}

function Watermark() {
  return (
    <div className="absolute inset-0 overflow-hidden pointer-events-none grid grid-cols-[repeat(11,250px)] auto-rows-[250px] select-none" aria-hidden="true">
      {Array.from({ length: 66 }, (_, i) => (
        <span key={i} className="flex items-center justify-center">
          <span className="-rotate-[32deg] text-[38px] text-[#808080] opacity-20 [-webkit-text-stroke:2px_#808080]">EAHub.cn</span>
        </span>
      ))}
    </div>
  );
}

export default function App() {
  return (
    <div className="relative h-screen flex flex-col bg-black overflow-hidden font-['Liberation_Sans','Noto_Sans_CJK_SC',sans-serif]">
      <Toolbar />
      <main className="flex-1 min-h-0 grid grid-cols-[1fr_68px] grid-rows-[1fr_20px]">
        <div className="relative ml-[2px] mt-[2px] border border-white overflow-hidden">
          <PriceChart />
          <ChartHeader />
          <MonitorPanel />
          <div className="absolute right-[9px] top-6 text-right">
            <p className="text-[15px] leading-5 text-[#00b4f5]">2025.12.12 17:01:53 (本地)</p>
            <p className="text-[25px] leading-6 font-bold text-[#ffd700]">XAUUSD M5</p>
          </div>
        </div>
        <PriceAxis />
        <TimeAxis />
      </main>
      <Watermark />
    </div>
  );
}
